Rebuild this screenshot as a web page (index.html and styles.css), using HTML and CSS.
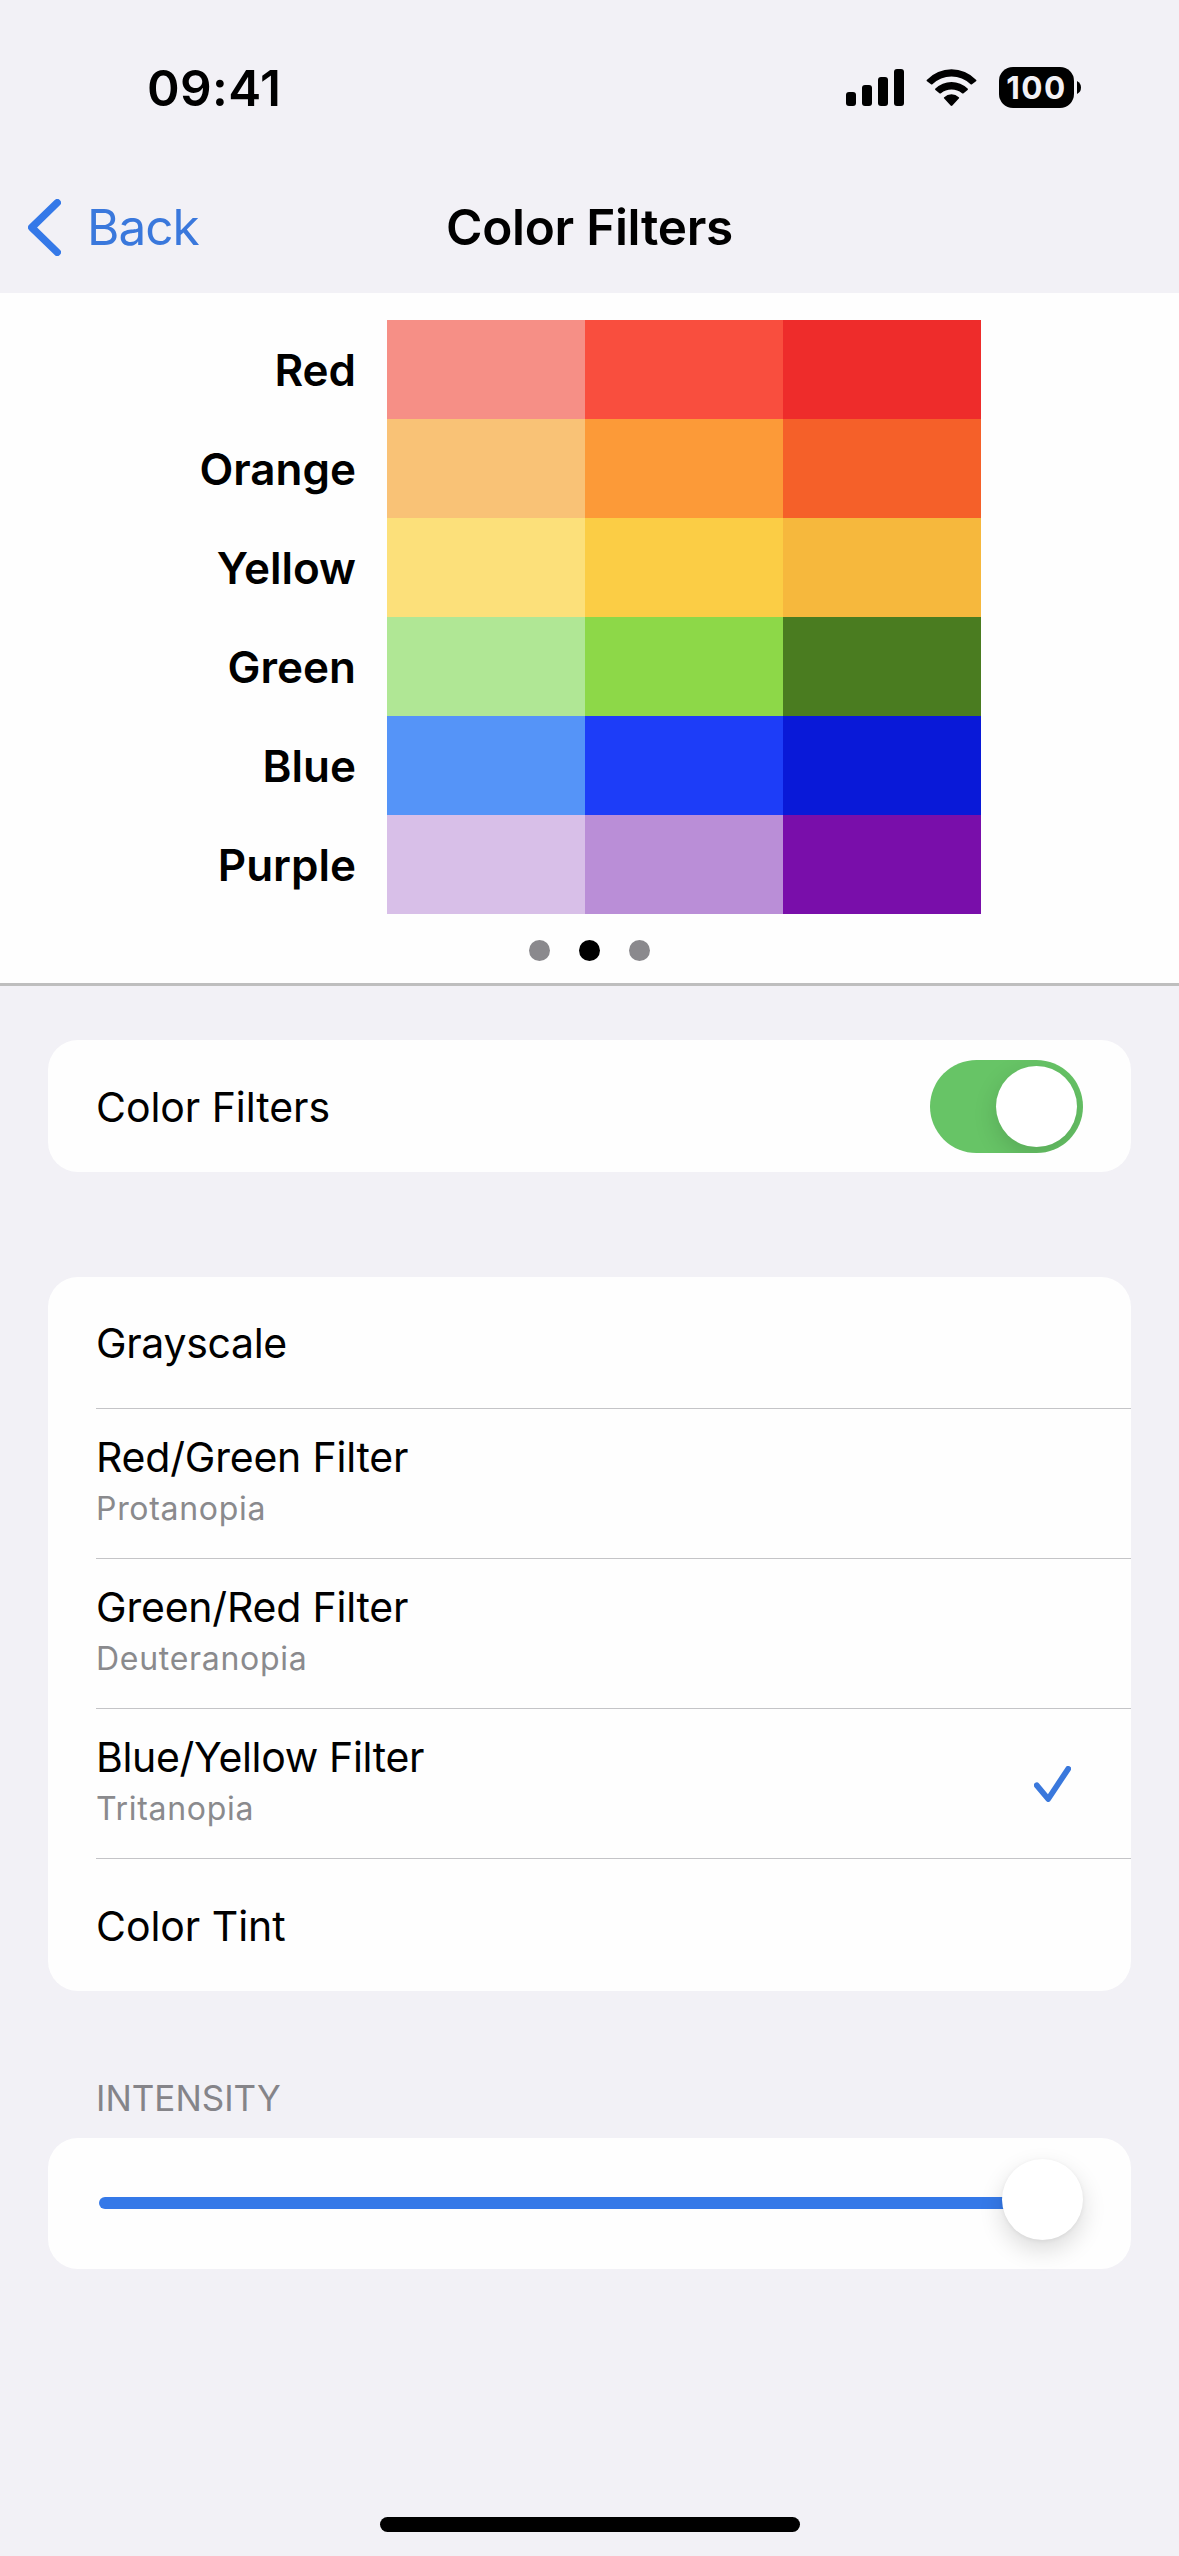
FILE: index.html
```html
<!DOCTYPE html>
<html lang="en">
<head>
  <meta charset="utf-8">
  <title>Color Filters</title>
  <link rel="stylesheet" href="styles.css">
</head>
<body>
  <header class="status-bar">
    <time class="clock">09:41</time>
    <div class="status-icons">
      <svg class="signal" width="58" height="37" viewBox="0 0 58 37" aria-hidden="true">
        <rect x="0" y="23" width="10" height="14" rx="3"/>
        <rect x="16" y="16" width="10" height="21" rx="3"/>
        <rect x="32" y="8" width="10" height="29" rx="3"/>
        <rect x="48" y="0" width="10" height="37" rx="3"/>
      </svg>
      <svg class="wifi" width="51" height="37" viewBox="0 0 51 37" aria-hidden="true">
        <path d="M1 10.7A33.9 33.9 0 0 1 50 10.7Q50.8 11.4 50 12.2L46 15.3Q45.3 15.9 44.6 15.3A27.4 27.4 0 0 0 6.4 15.3Q5.7 15.9 5 15.3L1 12.2Q.2 11.4 1 10.7Z"/>
        <path d="M9.4 19.5A23 23 0 0 1 41.6 19.5Q42.4 20.3 41.6 21.1L37.6 24.3Q36.8 24.9 36 24.3A16.5 16.5 0 0 0 15 24.3Q14.2 24.9 13.4 24.3L9.4 21.1Q8.6 20.3 9.4 19.5Z"/>
        <path d="M18.2 28.2A10.5 10.5 0 0 1 32.8 28.2Q33.5 28.9 32.8 29.6L26.4 36.5Q25.5 37.4 24.6 36.5L18.2 29.6Q17.5 28.9 18.2 28.2Z"/>
      </svg>
      <div class="battery">
        <span class="battery-level">100</span>
        <svg class="battery-tip" width="4" height="13" viewBox="0 0 4 13" aria-hidden="true"><path d="M0 0Q4 2 4 6.5T0 13Z"/></svg>
      </div>
    </div>
  </header>

  <nav class="nav-bar">
    <a class="back">
      <svg width="33" height="57" viewBox="0 0 33 57" aria-hidden="true"><path d="M29.3 3.7 3.7 28.500 29.3 53.300"/></svg>
      <span>Back</span>
    </a>
    <h1 class="title">Color Filters</h1>
  </nav>

  <section class="preview">
    <div class="chart">
      <span class="label">Red</span><i class="swatch red-1"></i><i class="swatch red-2"></i><i class="swatch red-3"></i>
      <span class="label">Orange</span><i class="swatch orange-1"></i><i class="swatch orange-2"></i><i class="swatch orange-3"></i>
      <span class="label">Yellow</span><i class="swatch yellow-1"></i><i class="swatch yellow-2"></i><i class="swatch yellow-3"></i>
      <span class="label">Green</span><i class="swatch green-1"></i><i class="swatch green-2"></i><i class="swatch green-3"></i>
      <span class="label">Blue</span><i class="swatch blue-1"></i><i class="swatch blue-2"></i><i class="swatch blue-3"></i>
      <span class="label">Purple</span><i class="swatch purple-1"></i><i class="swatch purple-2"></i><i class="swatch purple-3"></i>
    </div>
    <div class="dots"><i class="dot"></i><i class="dot active"></i><i class="dot"></i></div>
  </section>

  <main class="settings">
    <section class="card">
      <div class="row">
        <span class="name">Color Filters</span>
        <span class="toggle"><span class="knob"></span></span>
      </div>
    </section>

    <section class="card filters">
      <div class="row"><span class="name tighter">Grayscale</span></div>
      <div class="row tall">
        <div class="text"><span class="name tight">Red/Green Filter</span><span class="detail">Protanopia</span></div>
      </div>
      <div class="row tall">
        <div class="text"><span class="name tight">Green/Red Filter</span><span class="detail">Deuteranopia</span></div>
      </div>
      <div class="row tall">
        <div class="text"><span class="name tighter">Blue/Yellow Filter</span><span class="detail">Tritanopia</span></div>
        <svg class="check" width="37" height="36" viewBox="0 0 37 36" aria-hidden="true"><path d="M2.8 19.3 14.2 33 34.2 2.8"/></svg>
      </div>
      <div class="row"><span class="name">Color Tint</span></div>
    </section>

    <h2 class="section-title">INTENSITY</h2>
    <section class="card slider-card">
      <div class="slider"><span class="thumb"></span></div>
    </section>
  </main>

  <div class="home-indicator"></div>
</body>
</html>
```
FILE: styles.css
```css
* {
  box-sizing: border-box;
}

body {
  margin: 0;
  height: 2556px;
  display: flex;
  flex-direction: column;
  background: #f2f1f6;
  color: #000;
  font-family: Inter, "Liberation Sans", sans-serif;
  overflow: hidden;
}

/* Status bar */
.status-bar {
  height: 161px;
  padding: 14px 98px 0 147px;
  display: flex;
  align-items: center;
  justify-content: space-between;
}

.clock {
  font-size: 49.5px;
  font-weight: 600;
  letter-spacing: 0.38px;
}

.status-icons {
  display: flex;
  align-items: center;
}

.wifi {
  margin-left: 22px;
}

.battery {
  display: flex;
  align-items: center;
  gap: 3px;
  margin-left: 22px;
}

.battery-level {
  width: 75px;
  height: 41px;
  border-radius: 14px;
  background: #000;
  color: #f2f1f6;
  font-size: 31.5px;
  font-weight: 650;
  line-height: 41px;
  letter-spacing: 1.4px;
  text-align: center;
}

/* Navigation */
.nav-bar {
  height: 132px;
  padding: 0 28px;
  display: grid;
  grid-template-columns: 1fr auto 1fr;
  align-items: center;
}

.back {
  display: flex;
  align-items: center;
  gap: 26px;
  color: #3a78dc;
  font-size: 49.5px;
  letter-spacing: -1px;
}

.back path {
  fill: none;
  stroke: #3579e8;
  stroke-width: 7.4;
  stroke-linecap: round;
  stroke-linejoin: round;
}

.title {
  margin: 0;
  font-size: 49.5px;
  font-weight: 600;
  letter-spacing: -0.29px;
}

/* Colour chart */
.preview {
  height: 693px;
  padding-top: 27px;
  background: #fefefe;
  border-bottom: 3px solid #bebebe;
}

.chart {
  display: grid;
  grid-template-columns: 387px repeat(3, 198px);
  grid-auto-rows: 99px;
}

.label {
  padding-right: 31px;
  font-size: 44px;
  font-weight: 600;
  line-height: 100px;
  text-align: right;
}

.red-1 { background: #f68f86; }
.red-2 { background: #f94e3e; }
.red-3 { background: #ee2c2b; }
.orange-1 { background: #f9c276; }
.orange-2 { background: #fc9a38; }
.orange-3 { background: #f56029; }
.yellow-1 { background: #fce07a; }
.yellow-2 { background: #fbcd45; }
.yellow-3 { background: #f6b83d; }
.green-1 { background: #b0e795; }
.green-2 { background: #8dd848; }
.green-3 { background: #4a7c20; }
.blue-1 { background: #5594f8; }
.blue-2 { background: #1d3df8; }
.blue-3 { background: #0919d8; }
.purple-1 { background: #d8bfe8; }
.purple-2 { background: #ba8ed7; }
.purple-3 { background: #790eaa; }

.dots {
  display: flex;
  justify-content: center;
  gap: 29px;
  padding-top: 26px;
}

.dot {
  width: 21px;
  height: 21px;
  border-radius: 50%;
  background: #8a898d;
}

.dot.active {
  background: #000;
}

/* Settings list */
.settings {
  flex: 1;
  padding: 54px 48px 0;
}

.card {
  border-radius: 30px;
  background: #fefefe;
}

.row {
  height: 132px;
  margin-left: 48px;
  padding-right: 48px;
  display: flex;
  align-items: center;
  justify-content: space-between;
}

.name {
  padding-top: 1px;
  font-size: 41px;
  line-height: 52px;
  letter-spacing: -0.05px;
}

.name.tight {
  letter-spacing: -0.2px;
}

.name.tighter {
  letter-spacing: -0.33px;
}

.filters {
  margin-top: 105px;
}

.filters .row:not(:last-child) {
  border-bottom: 1px solid #c4c4c7;
}

.row.tall {
  height: 150px;
  padding-right: 60px;
}

.text {
  display: flex;
  flex-direction: column;
  padding-bottom: 3px;
}

.detail {
  color: #8a8a8d;
  font-size: 32px;
  line-height: 51px;
  letter-spacing: 0.7px;
}

.toggle {
  width: 153px;
  height: 93px;
  padding: 6px;
  display: flex;
  justify-content: flex-end;
  border-radius: 47px;
  background: #67c466;
  overflow: hidden;
}

.knob {
  width: 81px;
  height: 81px;
  border-radius: 50%;
  background: #fff;
  box-shadow: 0 8px 24px rgba(0, 0, 0, 0.14);
}

.check path {
  fill: none;
  stroke: #3a78dc;
  stroke-width: 5.8;
  stroke-linecap: round;
  stroke-linejoin: round;
}

.section-title {
  margin: 81px 0 14px 48px;
  color: #858489;
  font-size: 35px;
  font-weight: 400;
  line-height: 52px;
}

.slider-card {
  height: 131px;
  padding: 59px 60px 0 51px;
}

.slider {
  height: 12px;
  display: flex;
  align-items: center;
  justify-content: flex-end;
  border-radius: 6px;
  background: #3579e8;
}

.thumb {
  flex: none;
  width: 81px;
  height: 81px;
  margin: 0 -12px 7px 0;
  border-radius: 50%;
  background: #fff;
  box-shadow: 0 10px 24px rgba(0, 0, 0, 0.14), 0 1px 4px rgba(0, 0, 0, 0.06);
}

.home-indicator {
  width: 420px;
  height: 15px;
  margin: 0 auto 24px;
  border-radius: 8px;
  background: #000;
}
```
